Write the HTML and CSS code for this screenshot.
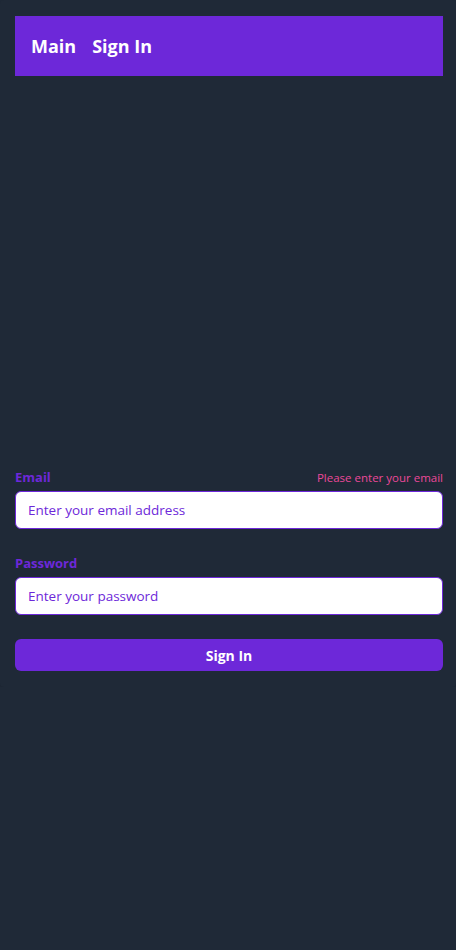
FILE: index.html
```html
<!DOCTYPE html>
<html>
<head>
<meta charset="utf-8">
<link rel="stylesheet" href="styles.css">
</head>
<body>
<div class="card">
  <nav class="topbar">
    <a class="nav-link">Main</a>
    <a class="nav-link">Sign In</a>
  </nav>
  <form class="signin">
    <div class="field">
      <div class="label-row">
        <label class="label">Email</label>
        <span class="error">Please enter your email</span>
      </div>
      <input class="input" type="email" placeholder="Enter your email address">
    </div>
    <div class="field">
      <div class="label-row">
        <label class="label">Password</label>
      </div>
      <input class="input" type="password" placeholder="Enter your password">
    </div>
    <button class="btn" type="button">Sign In</button>
  </form>
</div>
</body>
</html>
```
FILE: styles.css
```css
html, body {
  margin: 0;
  background: #1f2937;
  font-family: "Open Sans", "Noto Sans", sans-serif;
}
.card {
  background: #1f2937;
  border-radius: 4px;
  padding: 16px 13px 16px 15px;
  box-shadow: 0 4px 8px rgba(0, 0, 0, 0.12);
}
.topbar {
  height: 60px;
  background: #6d28d9;
  display: flex;
  align-items: center;
  gap: 16px;
  padding-left: 16px;
}
.nav-link {
  color: #ffffff;
  font-weight: 700;
  font-size: 18px;
}
.signin {
  margin-top: 391px;
  display: flex;
  flex-direction: column;
}
.field {
  display: flex;
  flex-direction: column;
  margin-bottom: 24px;
}
.label-row {
  display: flex;
  justify-content: space-between;
  align-items: center;
  height: 20px;
  margin-bottom: 4px;
}
.label {
  color: #6d28d9;
  font-size: 13px;
  font-weight: 700;
}
.error {
  color: #ec4899;
  font-size: 11.5px;
}
.input {
  box-sizing: border-box;
  height: 38px;
  width: 100%;
  border: 1px solid #6d28d9;
  border-radius: 6px;
  background: #ffffff;
  padding: 0 12px;
  font-family: inherit;
  font-size: 13.5px;
  outline: none;
}
.input::placeholder {
  color: #6d28d9;
  opacity: 1;
}
.btn {
  height: 32px;
  border: none;
  border-radius: 6px;
  background: #6d28d9;
  color: #ffffff;
  font-family: inherit;
  font-weight: 700;
  font-size: 14px;
}
```
